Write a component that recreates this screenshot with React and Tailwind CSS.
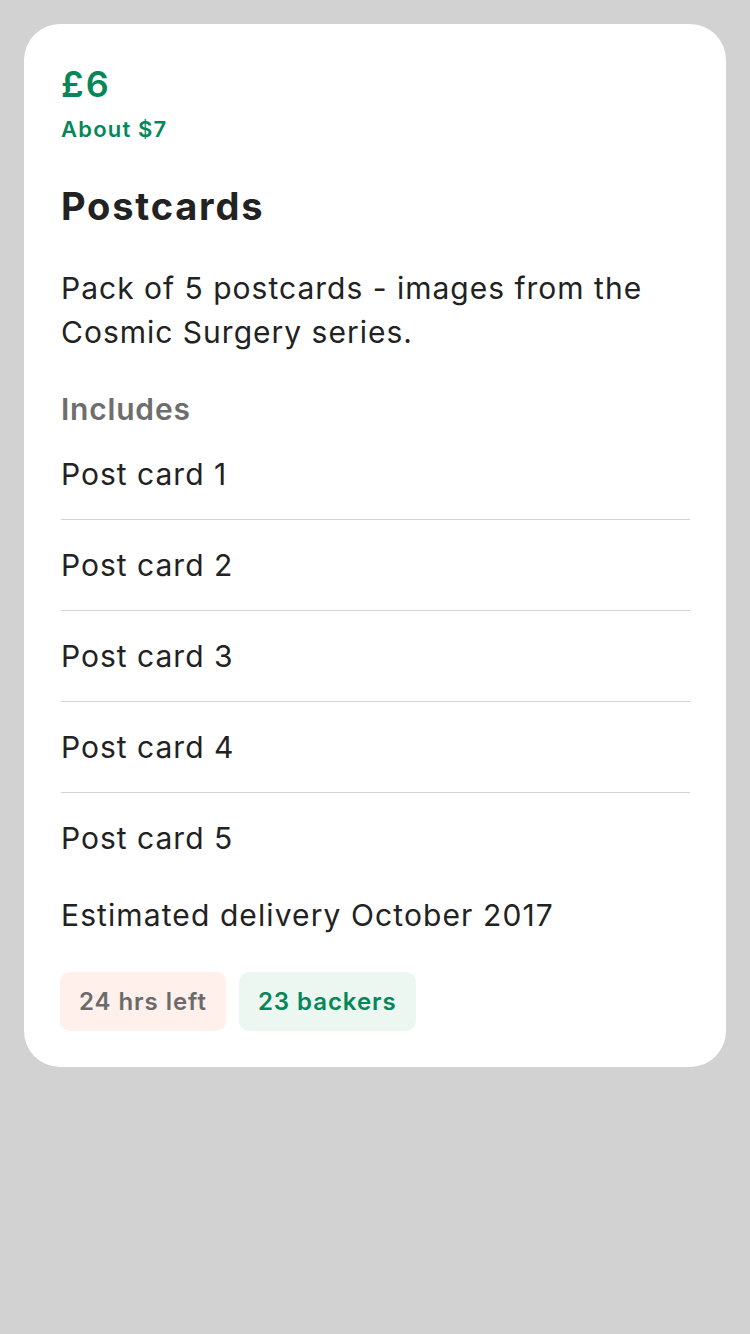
import React from "react";

const items = ["Post card 1", "Post card 2", "Post card 3", "Post card 4", "Post card 5"];

export default function App() {
  return (
    <div
      className="min-h-screen bg-[#d2d2d2] p-6"
      style={{ fontFamily: "Inter, 'Noto Sans', sans-serif" }}
    >
      <div className="bg-white rounded-[36px] pl-[37px] pr-9 pt-9 pb-9">
        <div className="text-[36px] leading-[48px] font-semibold tracking-[2px] text-[#05875a]">£6</div>
        <div className="mt-[7px] text-[22px] leading-[28px] font-semibold tracking-[1.2px] text-[#05875a]">About $7</div>

        <h1 className="mt-10 text-[38px] leading-[46px] font-bold tracking-[1.8px] text-[#222]">Postcards</h1>
        <p className="mt-[37px] text-[30px] leading-[44px] tracking-[1px] text-[#222]">
          Pack of 5 postcards - images from the Cosmic Surgery series.
        </p>

        <div className="mt-[35px] text-[30px] leading-[40px] font-semibold tracking-[0.8px] text-[#6e6e6e]">Includes</div>
        <div>
          {items.map((it, i) => (
            <div
              key={it}
              className={`py-[25px] text-[30px] leading-[40px] tracking-[1px] text-[#222] ${
                i < items.length - 1 ? "border-b border-[#d4d4d4]" : ""
              }`}
            >
              {it}
            </div>
          ))}
        </div>

        <div className="mt-3 text-[30px] leading-[40px] tracking-[1.1px] text-[#222]">Estimated delivery October 2017</div>

        <div className="mt-[37px] -ml-px flex gap-[13px]">
          <span className="rounded-[10px] bg-[#fff0eb] px-[19px] h-[59px] flex items-center text-[24px] font-semibold tracking-[0.95px] text-[#6b6b6b]">
            24 hrs left
          </span>
          <span className="rounded-[10px] bg-[#edf7f2] px-[19px] h-[59px] flex items-center text-[24px] font-semibold tracking-[0.95px] text-[#05875a]">
            23 backers
          </span>
        </div>
      </div>
    </div>
  );
}
